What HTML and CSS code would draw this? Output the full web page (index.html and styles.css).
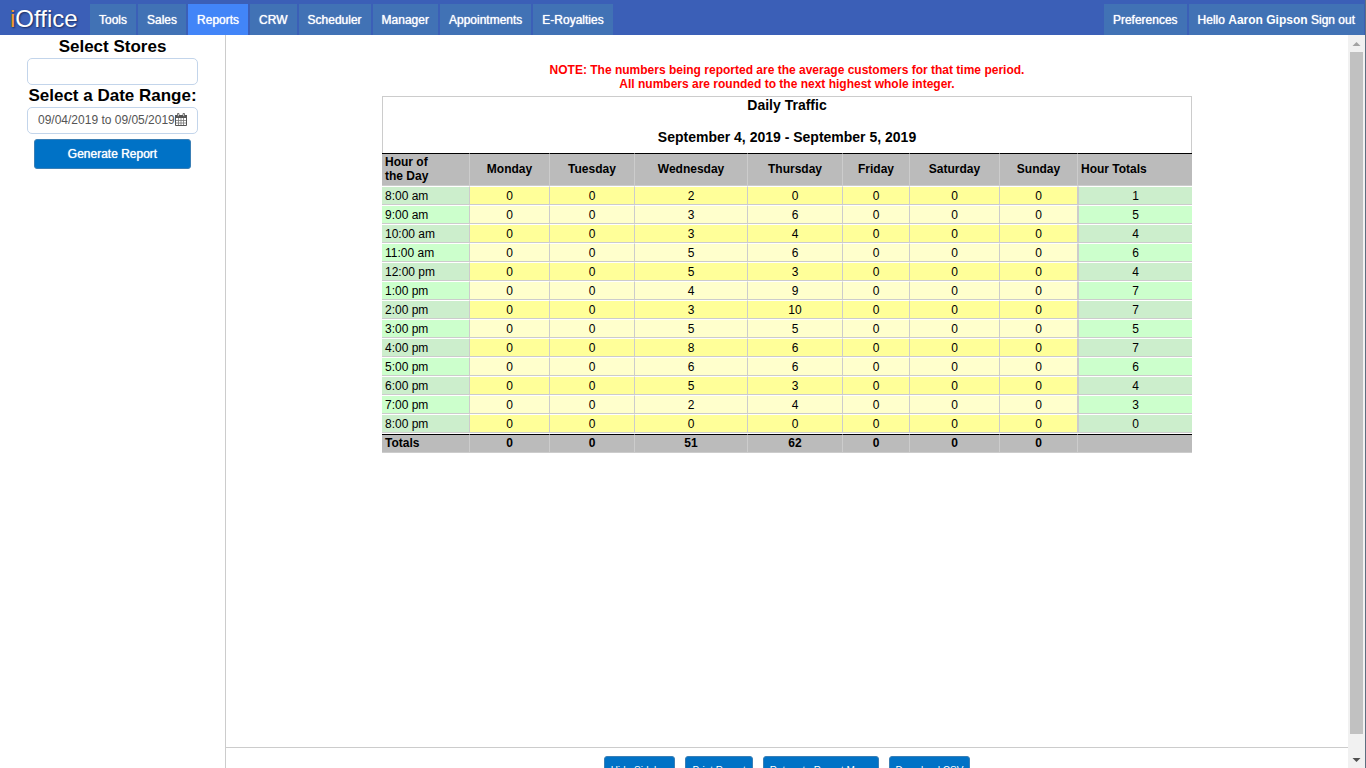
FILE: index.html
```html
<!DOCTYPE html>
<html lang="en">
<head>
<meta charset="utf-8">
<title>iOffice - Daily Traffic</title>
<link rel="stylesheet" href="styles.css">
</head>
<body>
<div class="app">
  <header class="topbar">
    <a class="logo" href="#"><span class="logo-i">i</span>Office</a>
    <nav class="menu">
      <a href="#">Tools</a>
      <a href="#">Sales</a>
      <a href="#" class="active">Reports</a>
      <a href="#">CRW</a>
      <a href="#">Scheduler</a>
      <a href="#">Manager</a>
      <a href="#">Appointments</a>
      <a href="#">E-Royalties</a>
    </nav>
    <nav class="menu account">
      <a href="#">Preferences</a>
      <a href="#">Hello <b>Aaron Gipson</b> Sign out</a>
    </nav>
  </header>
  <div class="body">
    <aside class="sidebar">
      <label for="stores">Select Stores</label>
      <input class="field" id="stores" type="text">
      <label for="range">Select a Date Range:</label>
      <div class="field date">
        <input id="range" type="text" value="09/04/2019 to 09/05/2019">
        <svg width="12" height="13" viewBox="0 0 12 13" aria-hidden="true">
          <path d="M.5 2.5h11v10H.5z" fill="#fff" stroke="#555"/>
          <path d="M0 2h12v3H0z" fill="#555"/>
          <path d="M3.500 5v7M6 5v7M8.500 5v7M1 7.500h10M1 10h10" stroke="#777" stroke-width=".8"/>
          <path d="M2.500 .5h1.500v3h-1.500zM8 .5h1.500v3h-1.500z" fill="#fff" stroke="#555" stroke-width=".8"/>
        </svg>
      </div>
      <button class="btn generate" type="button">Generate Report</button>
    </aside>
    <main class="main">
      <section class="report">
        <p class="note">NOTE: The numbers being reported are the average customers for that time period.<br>All numbers are rounded to the next highest whole integer.</p>
        <table class="traffic">
          <caption>Daily Traffic<br><br>September 4, 2019 - September 5, 2019</caption>
          <colgroup><col class="c-hour"><col class="c-mon"><col class="c-tue"><col class="c-wed"><col class="c-thu"><col class="c-fri"><col class="c-sat"><col class="c-sun"><col class="c-total"></colgroup>
          <thead>
            <tr><th>Hour of<br>the Day</th><th>Monday</th><th>Tuesday</th><th>Wednesday</th><th>Thursday</th><th>Friday</th><th>Saturday</th><th>Sunday</th><th>Hour Totals</th></tr>
          </thead>
          <tbody>
            <tr><th>8:00 am</th><td>0</td><td>0</td><td>2</td><td>0</td><td>0</td><td>0</td><td>0</td><td>1</td></tr>
            <tr><th>9:00 am</th><td>0</td><td>0</td><td>3</td><td>6</td><td>0</td><td>0</td><td>0</td><td>5</td></tr>
            <tr><th>10:00 am</th><td>0</td><td>0</td><td>3</td><td>4</td><td>0</td><td>0</td><td>0</td><td>4</td></tr>
            <tr><th>11:00 am</th><td>0</td><td>0</td><td>5</td><td>6</td><td>0</td><td>0</td><td>0</td><td>6</td></tr>
            <tr><th>12:00 pm</th><td>0</td><td>0</td><td>5</td><td>3</td><td>0</td><td>0</td><td>0</td><td>4</td></tr>
            <tr><th>1:00 pm</th><td>0</td><td>0</td><td>4</td><td>9</td><td>0</td><td>0</td><td>0</td><td>7</td></tr>
            <tr><th>2:00 pm</th><td>0</td><td>0</td><td>3</td><td>10</td><td>0</td><td>0</td><td>0</td><td>7</td></tr>
            <tr><th>3:00 pm</th><td>0</td><td>0</td><td>5</td><td>5</td><td>0</td><td>0</td><td>0</td><td>5</td></tr>
            <tr><th>4:00 pm</th><td>0</td><td>0</td><td>8</td><td>6</td><td>0</td><td>0</td><td>0</td><td>7</td></tr>
            <tr><th>5:00 pm</th><td>0</td><td>0</td><td>6</td><td>6</td><td>0</td><td>0</td><td>0</td><td>6</td></tr>
            <tr><th>6:00 pm</th><td>0</td><td>0</td><td>5</td><td>3</td><td>0</td><td>0</td><td>0</td><td>4</td></tr>
            <tr><th>7:00 pm</th><td>0</td><td>0</td><td>2</td><td>4</td><td>0</td><td>0</td><td>0</td><td>3</td></tr>
            <tr><th>8:00 pm</th><td>0</td><td>0</td><td>0</td><td>0</td><td>0</td><td>0</td><td>0</td><td>0</td></tr>
          </tbody>
          <tfoot>
            <tr><th>Totals</th><td>0</td><td>0</td><td>51</td><td>62</td><td>0</td><td>0</td><td>0</td><td></td></tr>
          </tfoot>
        </table>
      </section>
      <footer class="actions">
        <button class="btn" type="button">Hide Sidebar</button>
        <button class="btn" type="button">Print Report</button>
        <button class="btn" type="button">Return to Report Menu</button>
        <button class="btn" type="button">Download CSV</button>
      </footer>
    </main>
    <div class="scrollbar" aria-hidden="true">
      <svg width="17" height="17" viewBox="0 0 17 17"><path d="M4.500 11h8l-4-4z" fill="#a3a3a3"/></svg>
      <div class="track"><div class="thumb"></div></div>
      <svg width="17" height="17" viewBox="0 0 17 17"><path d="M4.500 7h8l-4 4z" fill="#505050"/></svg>
    </div>
  </div>
</div>
</body>
</html>
```
FILE: styles.css
```css
* { box-sizing: border-box; }
body {
  margin: 0;
  background: #fff;
  color: #000;
  font: 12px/14px "Liberation Sans", Arial, sans-serif;
}
.app {
  height: 100vh;
  overflow: hidden;
  display: flex;
  flex-direction: column;
  border-right: 1px solid #5d6f80;
}

/* top bar */
.topbar {
  flex: none;
  height: 35px;
  display: flex;
  align-items: stretch;
  background: #3b5fb7;
  padding: 4px 1px 0 10px;
}
.logo {
  width: 80px;
  color: #fff;
  font-size: 24px;
  line-height: 30px;
  text-decoration: none;
  text-shadow: 1px 1px 2px #1a2c5c;
}
.logo-i { color: #f09a2a; }
.menu { display: flex; gap: 2px; }
.menu a {
  display: block;
  padding: 0 9px;
  background: #4172b5;
  color: #fff;
  line-height: 32px;
  text-decoration: none;
  white-space: nowrap;
  text-shadow: 0 0 1px #fff;
}
.menu b { text-shadow: none; }
.menu a.active { background: #4285f8; }
.account { margin-left: auto; }

.body { flex: 1; min-height: 0; display: flex; }

/* sidebar */
.sidebar {
  flex: none;
  width: 226px;
  border-right: 1px solid #ccc;
  padding: 2px 27px;
  display: flex;
  flex-direction: column;
  align-items: center;
}
.sidebar label {
  font-size: 17px;
  font-weight: bold;
  line-height: 20px;
  white-space: nowrap;
  margin-bottom: 1px;
}
.field {
  flex: none;
  width: 100%;
  height: 27px;
  margin-bottom: 1px;
  border: 1px solid #c3d5eb;
  border-radius: 5px;
  background: #fff;
}
.date {
  display: flex;
  align-items: center;
  justify-content: center;
  padding-bottom: 2px;
  margin-bottom: 5px;
}
.date input {
  width: 137px;
  padding: 0;
  border: 0;
  color: #555;
  font: inherit;
}
.btn {
  border: 1px solid #3b7fb5;
  border-radius: 3px;
  background: #0072c6;
  color: #fff;
  font: 10px/14px "Liberation Sans", Arial, sans-serif;
  padding: 6px;
}
.generate {
  width: 157px;
  height: 30px;
  font-size: 12px;
  text-shadow: 0 0 1px #fff;
}

/* report */
.main { flex: 1; min-width: 0; display: flex; flex-direction: column; }
.report { flex: 1; min-height: 0; padding-top: 28px; overflow: hidden; }
.note {
  margin: 0 0 5px;
  color: #f00;
  font-weight: bold;
  text-align: center;
}
.traffic {
  width: 810px;
  max-width: 100%;
  margin: 0 auto;
  table-layout: fixed;
  border-collapse: separate;
  border-spacing: 0;
}
.traffic caption {
  height: 57px;
  border: 1px solid #ccc;
  border-bottom: 0;
  font-size: 14px;
  font-weight: bold;
  line-height: 16px;
}
.c-hour { width: 88px; }
.c-mon { width: 80px; }
.c-tue { width: 85px; }
.c-wed { width: 113px; }
.c-thu { width: 95px; }
.c-fri { width: 67px; }
.c-sat { width: 90px; }
.c-sun { width: 78px; }
.c-total { width: 114px; }
.traffic th, .traffic td {
  height: 19px;
  padding: 0 3px;
  border-top: 1px solid #fff;
  border-bottom: 1px solid #ccc;
  text-align: center;
}
.traffic :is(th, td):not(:last-child) { border-right: 1px solid #ccc; }
.traffic tr > :first-child { text-align: left; }
.traffic thead th, .traffic tfoot th, .traffic tfoot td {
  background: #bbb;
  border-top-color: #000;
  padding-bottom: 2px;
  font-weight: bold;
}
.traffic thead th { height: 33px; }
.traffic thead th:last-child { text-align: left; }
.traffic tbody::after { content: ""; display: table-row; height: 1px; }
.traffic tbody th { font-weight: normal; background: #cfc; }
.traffic tbody td { background: #ffc; }
.traffic tbody tr:nth-child(odd) td { background: #ff9; }
.traffic tbody td:last-child,
.traffic tbody tr td:last-child { background: #cfc; border-left: 1px solid #ccc; }
.traffic tbody tr:nth-child(odd) th,
.traffic tbody tr:nth-child(odd) td:last-child { background: #cec; }

.actions {
  flex: none;
  height: 21px;
  border-top: 1px solid #ccc;
  padding-top: 8px;
  display: flex;
  justify-content: center;
  align-items: flex-start;
  gap: 10px;
}
.actions .btn { padding-top: 7px; }

/* scroll bar */
.scrollbar {
  flex: none;
  width: 17px;
  display: flex;
  flex-direction: column;
  background: #f1f1f1;
}
.scrollbar svg { flex: none; }
.track { flex: 1; padding: 0 2px; }
.thumb { height: 97.5%; background: #c1c1c1; }
```
